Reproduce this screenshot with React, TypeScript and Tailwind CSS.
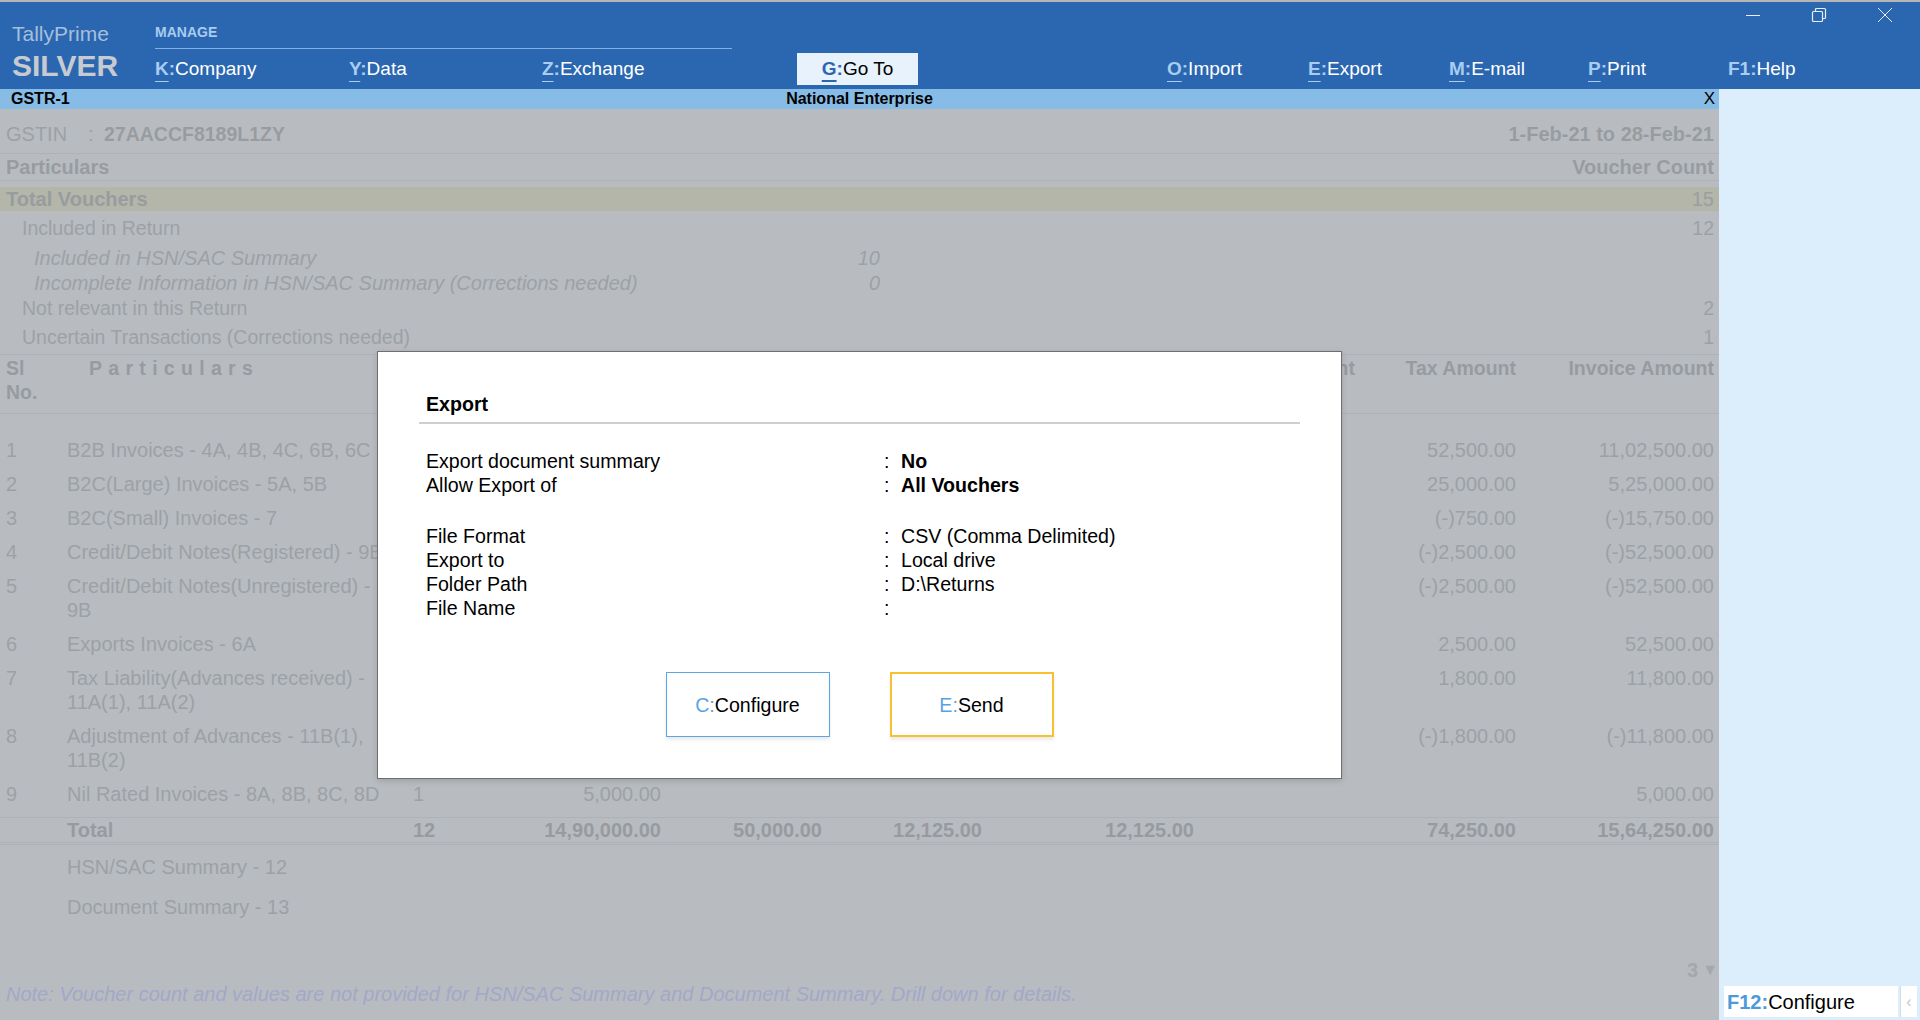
import React from "react";

type MenuProps = {
  k: string;
  label: string;
  className: string;
  underline?: boolean;
};

const MenuItem = ({ k, label, className, underline = true }: MenuProps) => (
  <div className={`flex items-center ${className}`}>
    <span className="font-bold text-[#a9cdf1]">
      <span className={underline ? "underline decoration-[#a9cdf1] decoration-1 underline-offset-[6px]" : ""}>{k[0]}</span>
      {k.slice(1)}:
    </span>
    <span className="text-white">{label}</span>
  </div>
);

type Row = {
  sl: string;
  name: string[];
  count?: string;
  taxable?: string;
  tax?: string;
  invoice?: string;
};

const rows: Row[] = [
  { sl: "1", name: ["B2B Invoices - 4A, 4B, 4C, 6B, 6C"], tax: "52,500.00", invoice: "11,02,500.00" },
  { sl: "2", name: ["B2C(Large) Invoices - 5A, 5B"], tax: "25,000.00", invoice: "5,25,000.00" },
  { sl: "3", name: ["B2C(Small) Invoices - 7"], tax: "(-)750.00", invoice: "(-)15,750.00" },
  { sl: "4", name: ["Credit/Debit Notes(Registered) - 9B"], tax: "(-)2,500.00", invoice: "(-)52,500.00" },
  { sl: "5", name: ["Credit/Debit Notes(Unregistered) -", "9B"], tax: "(-)2,500.00", invoice: "(-)52,500.00" },
  { sl: "6", name: ["Exports Invoices - 6A"], tax: "2,500.00", invoice: "52,500.00" },
  { sl: "7", name: ["Tax Liability(Advances received) -", "11A(1), 11A(2)"], tax: "1,800.00", invoice: "11,800.00" },
  { sl: "8", name: ["Adjustment of Advances - 11B(1),", "11B(2)"], tax: "(-)1,800.00", invoice: "(-)11,800.00" },
  { sl: "9", name: ["Nil Rated Invoices - 8A, 8B, 8C, 8D"], count: "1", taxable: "5,000.00", invoice: "5,000.00" },
];

const cols = "grid grid-cols-[67px_338px_95px_161px_161px_160px_212px_161px_161px_198px]";

const Line = () => <div className="h-px bg-[#aeb2b6]" />;

const WindowControls = () => (
  <div className="ml-auto flex h-[26px] w-[200px] items-center">
    <div className="flex w-[66px] justify-center">
      <svg width="16" height="16" viewBox="0 0 16 16">
        <path d="M1 8.5h14" stroke="#e8eff8" strokeWidth="1" />
      </svg>
    </div>
    <div className="flex w-[66px] justify-center">
      <svg width="16" height="16" viewBox="0 0 16 16" fill="none" stroke="#e8eff8" strokeWidth="1.2">
        <rect x="1.5" y="4.5" width="10" height="10" rx="1" />
        <path d="M4.5 4.5V2.5a1 1 0 0 1 1-1h8a1 1 0 0 1 1 1v8a1 1 0 0 1-1 1h-2" />
      </svg>
    </div>
    <div className="flex w-[66px] justify-center">
      <svg width="16" height="16" viewBox="0 0 16 16">
        <path d="M1 1l14 14M15 1L1 15" stroke="#e8eff8" strokeWidth="1" />
      </svg>
    </div>
  </div>
);

const ExportDialog = () => (
  <div className="absolute left-[377px] top-[242px] flex h-[428px] w-[965px] flex-col border border-[#6e6e6e] bg-white text-[19.6px] text-black shadow-[0_2px_6px_rgba(0,0,0,0.15)]">
    <div className="h-[70px] pl-[48px] pt-[40px] font-bold leading-[24px]">Export</div>
    <div className="mx-[41px] h-[2px] bg-[#cfcfcf]" />
    <div className="mt-[25px] flex flex-col leading-[24px]">
      {[
        ["Export document summary", "No"],
        ["Allow Export of", "All Vouchers"],
      ].map(([label, value]) => (
        <div key={label} className="flex h-[24px]">
          <span className="w-[506px] pl-[48px]">{label}</span>
          <span className="w-[17px]">:</span>
          <span className="font-bold">{value}</span>
        </div>
      ))}
      <div className="h-[27px]" />
      {[
        ["File Format", "CSV (Comma Delimited)"],
        ["Export to", "Local drive"],
        ["Folder Path", "D:\\Returns"],
        ["File Name", ""],
      ].map(([label, value]) => (
        <div key={label} className="flex h-[24px]">
          <span className="w-[506px] pl-[48px]">{label}</span>
          <span className="w-[17px]">:</span>
          <span>{value}</span>
        </div>
      ))}
    </div>
    <div className="mt-[52px] flex justify-center gap-[60px]">
      <div className="flex h-[65px] w-[164px] items-center justify-center border border-[#5aa6e6] shadow-[0_3px_3px_rgba(0,0,0,0.08)]">
        <span className="text-[#5aa2df]">C:</span>
        <span>Configure</span>
      </div>
      <div className="flex h-[65px] w-[164px] items-center justify-center border-2 border-[#f6c232] shadow-[0_3px_3px_rgba(0,0,0,0.08)]">
        <span className="text-[#5aa2df]">E:</span>
        <span>Send</span>
      </div>
    </div>
  </div>
);

const App = () => {
  return (
    <div className="flex h-[1020px] w-[1920px] flex-col overflow-hidden font-['Liberation_Sans',Arial,sans-serif] text-[20px]">
      <div className="h-[2px] bg-[#b6b6b6]" />
      {/* Top header */}
      <header className="flex h-[87px] bg-[#2b67b1]">
        <div className="flex w-[155px] flex-col pl-[12px] pt-[20px]">
          <div className="text-[21px] leading-[24px] text-[#a6bfdc]">TallyPrime</div>
          <div className="mt-[4px] text-[30px] font-bold leading-[32px] text-[#c7cbd0]">SILVER</div>
        </div>
        <div className="flex flex-1 flex-col">
          <div className="flex h-[47px]">
            <div className="h-[47px] w-[577px] border-b border-[#7fb1e5] pt-[22px] text-[14px] font-bold leading-[16px] text-[#a9cbee]">
              MANAGE
            </div>
            <WindowControls />
          </div>
          <div className="flex h-[40px] items-center text-[19px]">
            <MenuItem k="K" label="Company" className="w-[194px]" />
            <MenuItem k="Y" label="Data" className="w-[193px]" />
            <MenuItem k="Z" label="Exchange" className="w-[255px]" />
            <div className="flex h-[32px] w-[121px] items-center justify-center bg-[#e7f2fc]">
              <span className="font-bold text-[#2b67b1]">
                <span className="underline decoration-[#2b67b1] decoration-2 underline-offset-[5px]">G</span>:
              </span>
              <span className="text-black">Go To</span>
            </div>
            <div className="w-[249px]" />
            <MenuItem k="O" label="Import" className="w-[141px]" />
            <MenuItem k="E" label="Export" className="w-[141px]" />
            <MenuItem k="M" label="E-mail" className="w-[139px]" />
            <MenuItem k="P" label="Print" className="w-[140px]" />
            <MenuItem k="F1" label="Help" className="flex-1" underline={false} />
          </div>
        </div>
      </header>

      <div className="flex flex-1">
        {/* Main report */}
        <div className="flex w-[1719px] flex-col">
          <div className="grid h-[20px] grid-cols-[1fr_auto_1fr] items-center bg-[#87bce6] text-[16px] font-bold leading-[20px] text-black">
            <span className="pl-[11px]">GSTR-1</span>
            <span>National Enterprise</span>
            <span className="pr-[4px] text-right text-[17px] font-normal">X</span>
          </div>

          <div className="relative flex flex-1 flex-col bg-[#b8bcc0] leading-[24px] text-[#9da1a6]">
            <div className="flex h-[44px] items-start justify-between pl-[6px] pr-[5px] pt-[13px]">
              <div className="flex">
                <span className="w-[82px]">GSTIN</span>
                <span className="w-[16px]">:</span>
                <span className="text-[19.5px] font-bold text-[#989ca1]">27AACCF8189L1ZY</span>
              </div>
              <span className="font-bold text-[#989ca1]">1-Feb-21 to 28-Feb-21</span>
            </div>
            <Line />
            <div className="flex h-[26px] items-center justify-between pl-[6px] pr-[5px] font-bold text-[#989ca1]">
              <span>Particulars</span>
              <span>Voucher Count</span>
            </div>
            <Line />
            <div className="h-[6px]" />
            <div className="flex h-[24px] items-center justify-between bg-[#b3b6a9] pl-[6px] pr-[5px]">
              <span className="font-bold text-[#989ca1]">Total Vouchers</span>
              <span className="text-[#9a9ea2]">15</span>
            </div>
            <div className="flex h-[34px] items-center justify-between pl-[22px] pr-[5px] text-[19.5px]">
              <span>Included in Return</span>
              <span>12</span>
            </div>
            <div className="flex h-[25px] w-[880px] items-center justify-between pl-[34px] italic">
              <span>Included in HSN/SAC Summary</span>
              <span>10</span>
            </div>
            <div className="flex h-[26px] w-[880px] items-center justify-between pl-[34px] italic">
              <span>Incomplete Information in HSN/SAC Summary (Corrections needed)</span>
              <span>0</span>
            </div>
            <div className="flex h-[24px] items-center justify-between pl-[22px] pr-[5px] text-[19.5px]">
              <span>Not relevant in this Return</span>
              <span>2</span>
            </div>
            <div className="flex h-[34px] items-center justify-between pl-[22px] pr-[5px] text-[19.5px]">
              <span>Uncertain Transactions (Corrections needed)</span>
              <span>1</span>
            </div>
            <Line />

            {/* Table header */}
            <div className={`${cols} h-[58px] pt-[1px] text-[19.5px] font-bold text-[#979ba0]`}>
              <span className="pl-[6px]">
                Sl
                <br />
                No.
              </span>
              <span className="pl-[22px] tracking-[6.3px]">Particulars</span>
              <span />
              <span />
              <span />
              <span />
              <span />
              <span className="whitespace-nowrap text-right">Cess Amount</span>
              <span className="whitespace-nowrap text-right">Tax Amount</span>
              <span className="whitespace-nowrap text-right">Invoice Amount</span>
            </div>
            <Line />
            <div className="h-[19px]" />

            {rows.map((r) => (
              <div key={r.sl} className={`${cols} py-[5px]`}>
                <span className="pl-[6px]">{r.sl}</span>
                <span>
                  {r.name.map((n) => (
                    <span key={n} className="block whitespace-nowrap">
                      {n}
                    </span>
                  ))}
                </span>
                <span className="pl-[8px]">{r.count}</span>
                <span className="text-right">{r.taxable}</span>
                <span />
                <span />
                <span />
                <span />
                <span className="text-right">{r.tax}</span>
                <span className="text-right">{r.invoice}</span>
              </div>
            ))}
            <div className="h-[6px]" />
            <Line />
            <div className={`${cols} h-[24px] font-bold text-[#979ba0]`}>
              <span />
              <span>Total</span>
              <span className="pl-[8px]">12</span>
              <span className="text-right">14,90,000.00</span>
              <span className="text-right">50,000.00</span>
              <span className="text-right">12,125.00</span>
              <span className="text-right">12,125.00</span>
              <span />
              <span className="text-right">74,250.00</span>
              <span className="text-right">15,64,250.00</span>
            </div>
            <Line />
            <div className="h-px" />
            <Line />
            <div className="flex h-[44px] items-center pl-[67px]">HSN/SAC Summary - 12</div>
            <div className="flex h-[36px] items-center pl-[67px]">Document Summary - 13</div>
            <div className="flex-1" />
            <div className="flex h-[24px] items-center justify-end gap-[4px] pr-[1px] text-[#a4a8ac]">
              <span className="font-bold">3</span>
              <span className="text-[16px]">▼</span>
            </div>
            <div className="h-[24px] pl-[6px] italic text-[#a3a7c9]">
              Note: Voucher count and values are not provided for HSN/SAC Summary and Document Summary. Drill down for
              details.
            </div>
            <div className="h-[14px]" />

            <ExportDialog />
          </div>
        </div>

        {/* Right button bar */}
        <div className="flex flex-1 flex-col justify-end bg-[#dcedfb] pb-[3px]">
          <div className="flex h-[31px] items-stretch pl-[5px]">
            <div className="flex w-[174px] items-center bg-white pl-[3px]">
              <span className="font-bold text-[#4d9ad8]">F12:</span>
              <span className="text-black">Configure</span>
            </div>
            <div className="ml-[2px] flex w-[17px] items-center justify-center border-l border-[#d5dde5] bg-white text-[16px] text-[#c4c8cc]">
              ‹
            </div>
          </div>
        </div>
      </div>
    </div>
  );
};

export default App;
